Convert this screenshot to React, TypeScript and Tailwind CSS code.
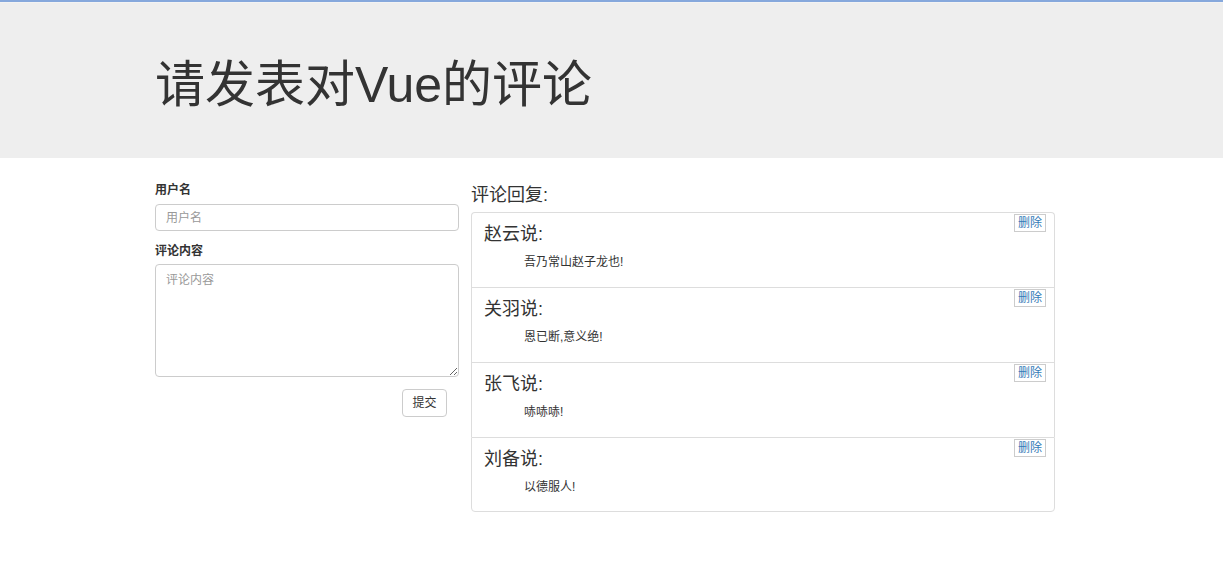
const comments = [
  { name: '赵云', content: '吾乃常山赵子龙也!' },
  { name: '关羽', content: '恩已断,意义绝!' },
  { name: '张飞', content: '哧哧哧!' },
  { name: '刘备', content: '以德服人!' },
];

export default function App() {
  return (
    <div
      className="min-h-[586px] bg-white text-[#333]"
      style={{ fontFamily: '"Liberation Sans", "Noto Sans CJK SC", sans-serif' }}
    >
      {/* top line */}
      <div className="h-[2px] bg-[#86a8dc]" />
      <div className="h-[1px] bg-[#f3f3f3]" />

      {/* Jumbotron */}
      <div className="h-[155px] bg-[#eeeeee] flex items-center">
        <h1 className="ml-[155px] text-[50px] leading-none font-normal text-[#333] mt-[8px]">
          请发表对Vue的评论
        </h1>
      </div>

      <div className="ml-[155px] w-[900px] flex gap-[12px]">
        {/* Form */}
        <div className="w-[304px] pt-[24px] flex flex-col">
          <label className="text-[12px] leading-[17px] font-bold mb-[5px]">用户名</label>
          <input
            placeholder="用户名"
            className="h-[27px] w-full border border-[#ccc] rounded-[4px] px-[10px] text-[12px] placeholder:text-[#999] outline-none"
          />
          <label className="text-[12px] leading-[17px] font-bold mt-[12px] mb-[4px]">评论内容</label>
          <textarea
            placeholder="评论内容"
            className="h-[113px] w-full border border-[#ccc] rounded-[4px] px-[10px] py-[6px] text-[12px] placeholder:text-[#999] outline-none"
          />
          <div className="flex justify-end mt-[12px] pr-[12px]">
            <button className="w-[45px] h-[28px] border border-[#ccc] rounded-[4px] bg-white text-[12px] text-[#333]">
              提交
            </button>
          </div>
        </div>

        {/* Comment list */}
        <div className="w-[584px] pt-[25px]">
          <h3 className="text-[18px] leading-[24px] font-normal">评论回复:</h3>
          <ul className="mt-[5px]">
            {comments.map((c, i) => (
              <li
                key={i}
                className={`relative h-[75px] border-x border-t border-[#ddd] bg-white px-[12px] ${i === 0 ? 'rounded-t-[4px]' : ''} ${i === comments.length - 1 ? 'border-b rounded-b-[4px]' : ''}`}
              >
                <button className="absolute top-[1px] right-[8px] h-[18px] px-[3px] border border-[#ccc] bg-white text-[12px] leading-[16px] text-[#337ab7]">
                  删除
                </button>
                <h4 className="text-[18px] leading-[24px] font-normal mt-[9px]">{c.name}说:</h4>
                <p className="text-[12px] leading-[17px] ml-[40px] mt-[8px]">{c.content}</p>
              </li>
            ))}
          </ul>
        </div>
      </div>
    </div>
  );
}
